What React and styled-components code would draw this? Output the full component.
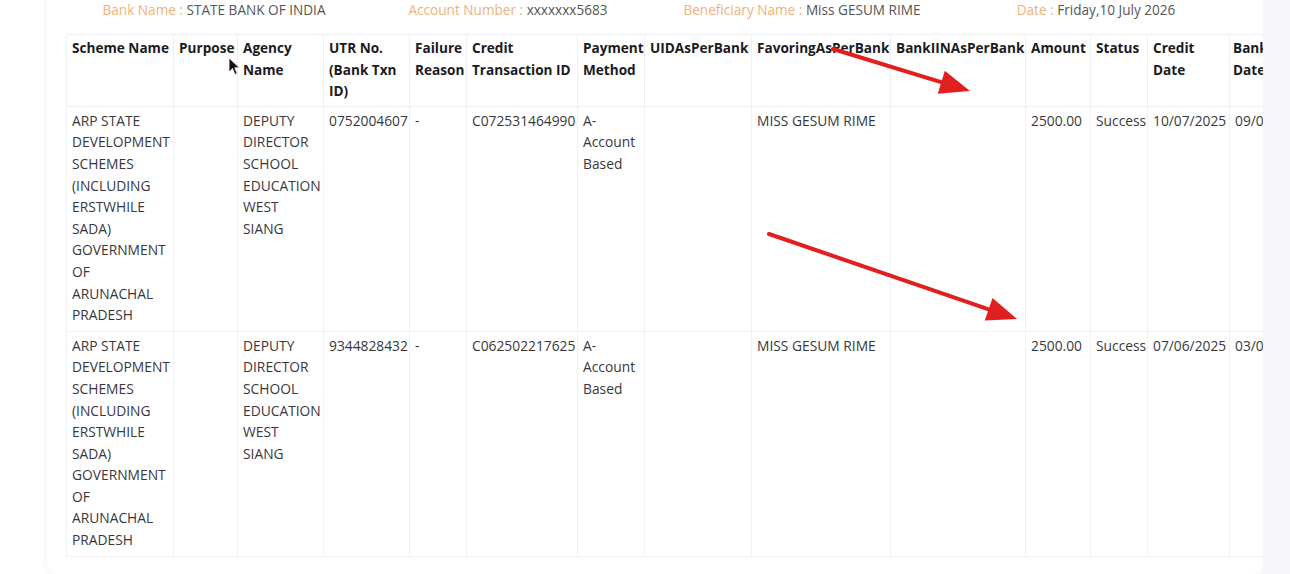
import React from "react";
import styled, { createGlobalStyle } from "styled-components";

const GlobalStyle = createGlobalStyle`
  html, body { margin: 0; padding: 0; background: #ffffff; overflow: hidden; }
  * { box-sizing: border-box; }
`;

const Page = styled.div`
  position: relative;
  display: flex;
  width: 1290px;
  height: 574px;
  padding-left: 47px;
  overflow: hidden;
  background: #ffffff;
`;

const Card = styled.section`
  width: 1216px;
  flex: none;
  align-self: flex-start;
  margin-top: -12px;
  padding: 12px 0 17px 19px;
  background: #ffffff;
  border-radius: 10px;
  box-shadow: 0 0 9px rgba(30, 30, 60, 0.07);
  overflow: hidden;
`;

const SideStrip = styled.div`
  flex: 1;
  background: #f6f6f9;
`;

const InfoBar = styled.div`
  display: grid;
  grid-template-columns: repeat(4, 294px);
  margin-left: 1px;
  height: 20px;
  margin-bottom: 14px;
  font-family: "Open Sans", "Noto Sans", sans-serif;
  font-size: 13.6px;
  line-height: 20px;
  color: #555555;
`;

const InfoItem = styled.div`
  text-align: center;
  white-space: nowrap;
`;

const InfoLabel = styled.span`
  color: #eeb27c;
`;

const Table = styled.table`
  border-collapse: collapse;
  table-layout: fixed;
  width: ${(p) => p.$width}px;
  font-family: "Open Sans", "Noto Sans", sans-serif;
  line-height: 21.6px;
`;

const HeadCell = styled.th`
  text-align: left;
  vertical-align: top;
  padding: 2px 3px 4px ${(p) => p.$pad}px;
  font-size: 13.6px;
  font-weight: 700;
  color: #1b1b1f;
  white-space: nowrap;
  border: 1px solid #eeeef4;
`;

const BodyCell = styled.td`
  vertical-align: top;
  padding: 3px 3px 5px 5px;
  font-size: 13.8px;
  color: #38383c;
  border: 1px solid #f0f0f5;
  white-space: normal;
  overflow: visible;
`;

const Overlay = styled.svg`
  position: absolute;
  left: 0;
  top: 0;
  width: 1290px;
  height: 574px;
  pointer-events: none;
`;

const columns = [
  { key: "scheme", head: ["Scheme Name"], w: 107 },
  { key: "purpose", head: ["Purpose"], w: 64 },
  { key: "agency", head: ["Agency", "Name"], w: 86 },
  { key: "utr", head: ["UTR No.", "(Bank Txn", "ID)"], w: 86 },
  { key: "failure", head: ["Failure", "Reason"], w: 57 },
  { key: "credit", head: ["Credit", "Transaction ID"], w: 111 },
  { key: "method", head: ["Payment", "Method"], w: 67 },
  { key: "uid", head: ["UIDAsPerBank"], w: 107 },
  { key: "favor", head: ["FavoringAsPerBank"], w: 139 },
  { key: "iin", head: ["BankIINAsPerBank"], w: 135 },
  { key: "amount", head: ["Amount"], w: 65 },
  { key: "status", head: ["Status"], w: 57 },
  { key: "cdate", head: ["Credit", "Date"], w: 82 },
  { key: "bdate", head: ["Bank", "Date"], w: 82, pad: 3 },
];

const scheme =
  "ARP STATE DEVELOPMENT SCHEMES (INCLUDING ERSTWHILE SADA) GOVERNMENT OF ARUNACHAL PRADESH";
const agency = "DEPUTY DIRECTOR SCHOOL EDUCATION WEST SIANG";

const rows = [
  {
    scheme,
    purpose: "",
    agency,
    utr: "0752004607",
    failure: "-",
    credit: "C072531464990",
    method: "A- Account Based",
    uid: "",
    favor: "MISS GESUM RIME",
    iin: "",
    amount: "2500.00",
    status: "Success",
    cdate: "10/07/2025",
    bdate: "09/07/2025",
  },
  {
    scheme,
    purpose: "",
    agency,
    utr: "9344828432",
    failure: "-",
    credit: "C062502217625",
    method: "A- Account Based",
    uid: "",
    favor: "MISS GESUM RIME",
    iin: "",
    amount: "2500.00",
    status: "Success",
    cdate: "07/06/2025",
    bdate: "03/06/2025",
  },
];

const info = [
  ["Bank Name", "STATE BANK OF INDIA"],
  ["Account Number", "xxxxxxx5683"],
  ["Beneficiary Name", "Miss GESUM RIME"],
  ["Date", "Friday,10 July 2026"],
];

function Arrow({ x1, y1, x2, y2 }) {
  const dx = x2 - x1;
  const dy = y2 - y1;
  const len = Math.hypot(dx, dy);
  const ux = dx / len;
  const uy = dy / len;
  const hl = 30;
  const hw = 12;
  const bx = x2 - ux * hl;
  const by = y2 - uy * hl;
  const nx = -uy * hw;
  const ny = ux * hw;
  return (
    <g>
      <line
        x1={x1}
        y1={y1}
        x2={bx + ux * 4}
        y2={by + uy * 4}
        stroke="#e11f1f"
        strokeWidth="4"
        strokeLinecap="round"
      />
      <polygon
        points={`${x2},${y2} ${bx + nx},${by + ny} ${bx - nx},${by - ny}`}
        fill="#e11f1f"
      />
    </g>
  );
}

export default function App() {
  const width = columns.reduce((s, c) => s + c.w, 0);
  return (
    <>
      <GlobalStyle />
      <Page>
        <Card>
          <InfoBar>
            {info.map(([label, value]) => (
              <InfoItem key={label}>
                <InfoLabel>{label} : </InfoLabel>
                {value}
              </InfoItem>
            ))}
          </InfoBar>
          <Table $width={width}>
            <colgroup>
              {columns.map((c) => (
                <col key={c.key} style={{ width: c.w }} />
              ))}
            </colgroup>
            <thead>
              <tr>
                {columns.map((c) => (
                  <HeadCell key={c.key} $pad={c.pad ?? 5}>
                    {c.head.map((line, i) => (
                      <React.Fragment key={i}>
                        {i > 0 && <br />}
                        {line}
                      </React.Fragment>
                    ))}
                  </HeadCell>
                ))}
              </tr>
            </thead>
            <tbody>
              {rows.map((r, ri) => (
                <tr key={ri}>
                  {columns.map((c) => (
                    <BodyCell key={c.key}>{r[c.key]}</BodyCell>
                  ))}
                </tr>
              ))}
            </tbody>
          </Table>
        </Card>
        <SideStrip />
        <Overlay viewBox="0 0 1290 574">
          <Arrow x1={833} y1={49} x2={970} y2={91} />
          <Arrow x1={769} y1={234} x2={1017} y2={319} />
          <polygon
            points="229,58 229,72 232.5,68.6 235,74.5 237.2,73.6 234.8,67.8 239.5,67.8"
            fill="#111"
            stroke="#fff"
            strokeWidth="0.8"
          />
        </Overlay>
      </Page>
    </>
  );
}
